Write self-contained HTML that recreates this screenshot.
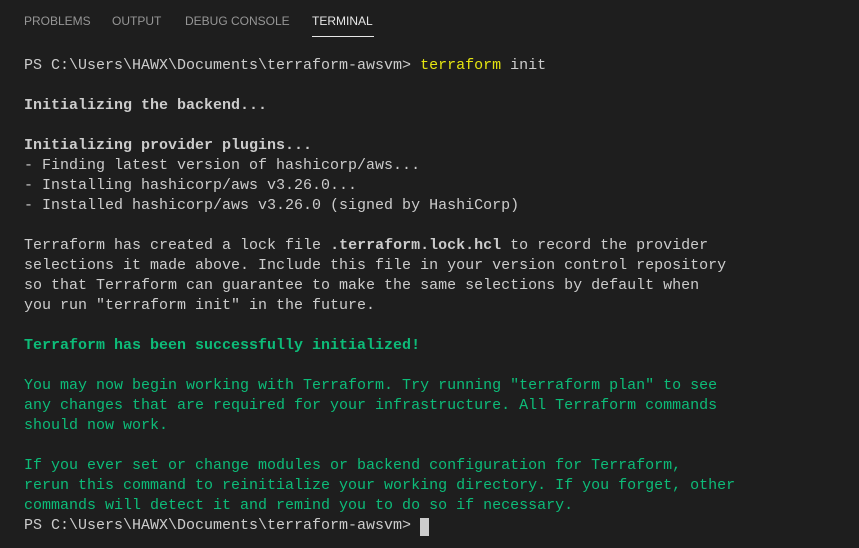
<!DOCTYPE html>
<html><head><style>
html,body{margin:0;padding:0;background:#1e1e1e;width:859px;height:548px;overflow:hidden}
.tabs{position:absolute;top:0;left:0;height:40px;font-family:"Liberation Sans",sans-serif;font-size:12px;color:#969696}
.tabs span{position:absolute;top:14px;white-space:nowrap}
.act{color:#e7e7e7}
.ul{position:absolute;left:312px;top:36px;width:62px;height:1px;background:#e7e7e7}
pre{position:absolute;left:24px;top:56px;margin:0;font-family:"Liberation Mono",monospace;font-size:15px;line-height:20px;color:#cccccc}
b{font-weight:bold}
.g{color:#0dbc79}.y{color:#e5e510}
.cur{position:absolute;left:420px;top:518px;width:9px;height:18px;background:#cccccc}
</style></head><body>
<div class="tabs">
<span style="left:24px">PROBLEMS</span>
<span style="left:112px">OUTPUT</span>
<span style="left:185px">DEBUG CONSOLE</span>
<span class="act" style="left:312px">TERMINAL</span>
</div>
<div class="ul"></div>
<pre>PS C:\Users\HAWX\Documents\terraform-awsvm&gt; <span class="y">terraform</span> init

<b>Initializing the backend...</b>

<b>Initializing provider plugins...</b>
- Finding latest version of hashicorp/aws...
- Installing hashicorp/aws v3.26.0...
- Installed hashicorp/aws v3.26.0 (signed by HashiCorp)

Terraform has created a lock file <b>.terraform.lock.hcl</b> to record the provider
selections it made above. Include this file in your version control repository
so that Terraform can guarantee to make the same selections by default when
you run "terraform init" in the future.

<span class="g"><b>Terraform has been successfully initialized!</b></span>

<span class="g">You may now begin working with Terraform. Try running "terraform plan" to see
any changes that are required for your infrastructure. All Terraform commands
should now work.

If you ever set or change modules or backend configuration for Terraform,
rerun this command to reinitialize your working directory. If you forget, other
commands will detect it and remind you to do so if necessary.</span>
PS C:\Users\HAWX\Documents\terraform-awsvm&gt; </pre>
<div class="cur"></div>
</body></html>
